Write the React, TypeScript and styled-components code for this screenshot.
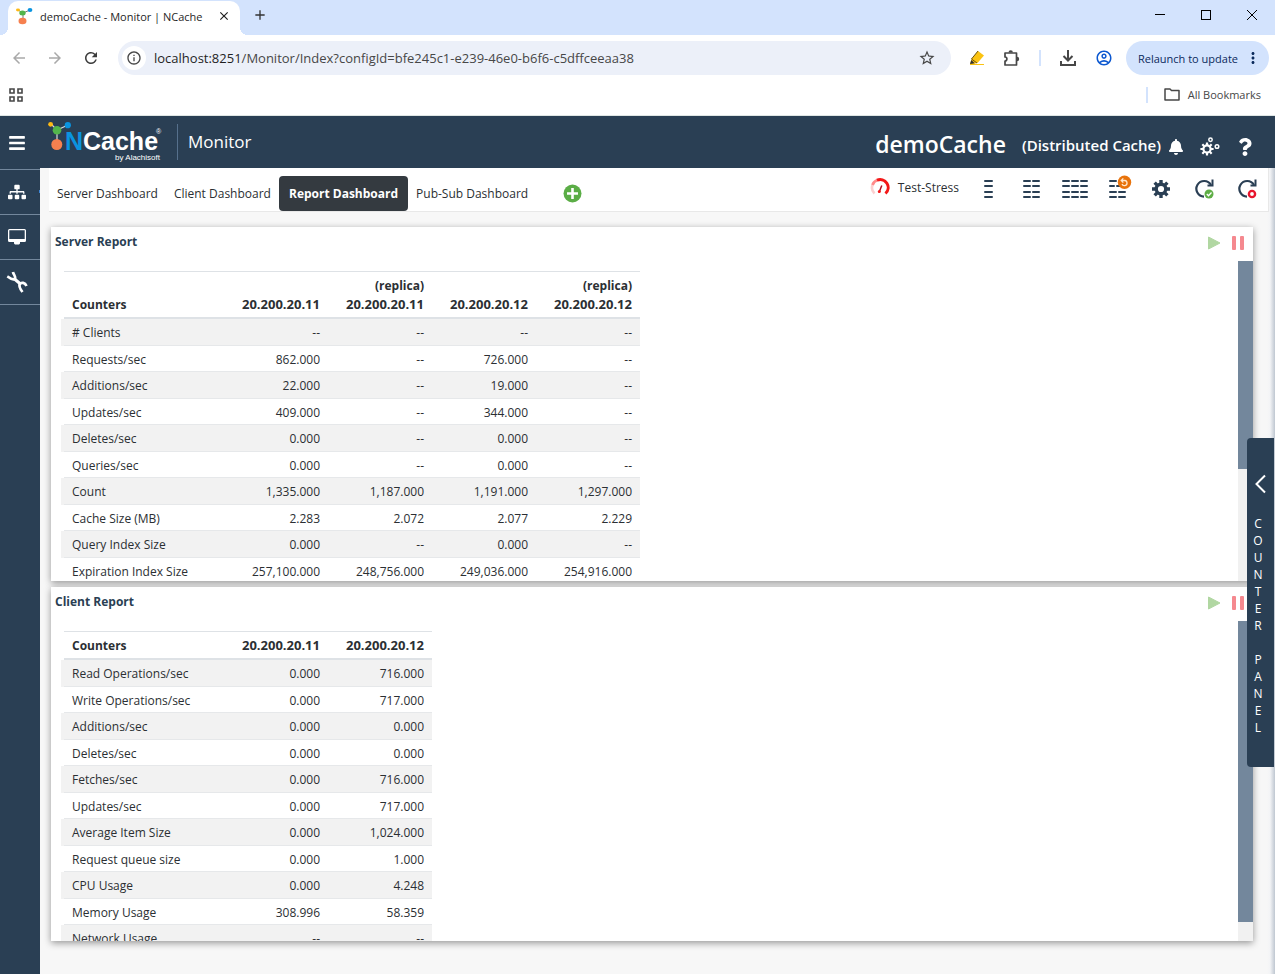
import React from "react";
import styled, { createGlobalStyle, css } from "styled-components";
import { FaBars, FaSitemap, FaBell, FaQuestion } from "react-icons/fa";
import {
  MdArrowBack, MdArrowForward, MdRefresh, MdInfoOutline, MdStarBorder,
  MdOutlineAccountCircle, MdMoreVert, MdAdd, MdClose,
} from "react-icons/md";

const navy = "#2a3f54";
const slate = "#73879c";

const GlobalStyle = createGlobalStyle`
  *, *::before, *::after { box-sizing: border-box; }
  body {
    margin: 0;
    background: #f7f7f7;
    color: #2b2f33;
    font-family: "Open Sans", "Noto Sans", sans-serif;
    font-size: 12px;
  }
  button { font: inherit; color: inherit; background: none; border: 0; padding: 0; cursor: pointer; }
  a { color: inherit; text-decoration: none; }
  svg { display: block; flex: none; }
`;

const Page = styled.div`
  min-height: 100vh;
  display: flex;
  flex-direction: column;
`;

/* ---------- browser frame ---------- */

const TitleBar = styled.div`
  height: 35px;
  display: flex;
  align-items: flex-end;
  padding-left: 8px;
  background: #d3e3fd;
`;

const BrowserTab = styled.div`
  position: relative;
  width: 232px;
  height: 34px;
  padding: 0 9px 4px 8px;
  display: flex;
  align-items: center;
  gap: 7px;
  background: #fff;
  border-radius: 10px 10px 0 0;
  font-size: 11px;
  color: #1f1f1f;
  &::before, &::after {
    content: "";
    position: absolute;
    bottom: 0;
    width: 8px;
    height: 8px;
  }
  &::before { left: -8px; background: radial-gradient(circle at 0 0, #d3e3fd 8px, #fff 8px); }
  &::after { right: -8px; background: radial-gradient(circle at 100% 0, #d3e3fd 8px, #fff 8px); }
`;

const TabTitle = styled.span`
  flex: 1;
  white-space: nowrap;
`;

const NewTab = styled.button`
  height: 30px;
  margin: 0 0 5px 12px;
  color: #333;
`;

const WindowControls = styled.div`
  margin-left: auto;
  height: 30px;
  margin-bottom: 5px;
  display: flex;
`;

const WindowButton = styled.button`
  width: 46px;
  display: flex;
  align-items: center;
  justify-content: center;
`;

const AddressRow = styled.div`
  height: 46px;
  display: flex;
  align-items: center;
  padding: 0 6px 0 10px;
  background: #fff;
  color: #474747;
`;

const NavButton = styled.button<{ $off?: boolean }>`
  width: 18px;
  margin-right: 18px;
  color: ${(p) => (p.$off ? "#a9a9a9" : "#3c3c3c")};
`;

const UrlBar = styled.div`
  flex: 1;
  height: 34px;
  margin-right: 18px;
  padding: 0 15px 0 4px;
  display: flex;
  align-items: center;
  border-radius: 17px;
  background: #ecf0f9;
`;

const SiteInfo = styled.button`
  width: 24px;
  height: 24px;
  display: flex;
  align-items: center;
  justify-content: center;
  border-radius: 12px;
  background: #fff;
`;

const Url = styled.span`
  flex: 1;
  margin-left: 8px;
  font-size: 13px;
  white-space: nowrap;
  b { font-weight: 400; color: #1f1f1f; }
`;

const Tools = styled.div`
  display: flex;
  align-items: center;
  gap: 18px;
`;

const Rule = styled.span`
  width: 2px;
  height: 16px;
  background: #d3e3fd;
`;

const Relaunch = styled.button`
  height: 34px;
  margin-left: 13px;
  padding: 0 7px 0 12px;
  display: flex;
  align-items: center;
  gap: 6px;
  border-radius: 17px;
  background: #d3e3fd;
  color: #0b2a5c;
  font-size: 11px;
  white-space: nowrap;
`;

const BookmarkRow = styled.div`
  height: 35px;
  display: flex;
  align-items: center;
  gap: 16px;
  padding: 0 14px 7px 9px;
  background: #fff;
  border-bottom: 1px solid #dfe6e4;
  color: #474747;
  font-size: 11px;
`;

const Bookmarks = styled.a`
  display: flex;
  align-items: center;
  gap: 8px;
`;

const Push = styled.span`
  flex: 1;
`;

/* ---------- application shell ---------- */

const Shell = styled.div`
  position: relative;
  flex: 1;
  display: flex;
`;

const Sidebar = styled.nav`
  width: 40px;
  flex: none;
  background: ${navy};
`;

const SideItem = styled.a<{ $tall?: boolean; $marked?: boolean }>`
  position: relative;
  height: ${(p) => (p.$tall ? 54 : 45)}px;
  padding-right: 6px;
  display: flex;
  align-items: center;
  justify-content: center;
  border-bottom: 1px solid ${slate};
  color: #fff;
  ${(p) => p.$marked && css`
    &::after {
      content: "";
      position: absolute;
      right: 0;
      top: 20px;
      width: 1px;
      height: 3px;
      background: #3d86d8;
    }
  `}
`;

const Main = styled.main`
  flex: 1;
  min-width: 0;
  display: flex;
  flex-direction: column;
`;

const Header = styled.header`
  height: 52px;
  padding: 0 21px 0 8px;
  display: flex;
  align-items: center;
  background: ${navy};
  color: #fff;
`;

const AppName = styled.h1`
  margin: 0 0 0 15px;
  padding-left: 10px;
  border-left: 1px solid #56708c;
  font-size: 17px;
  line-height: 36px;
  font-weight: 400;
`;

const CacheName = styled.h2`
  margin: 4px 16px 0 auto;
  font-size: 23px;
  line-height: 30px;
  font-weight: 600;
`;

const CacheKind = styled.span`
  margin: 6px 7px 0 0;
  font-size: 15px;
  font-weight: 600;
`;

const HeaderIcons = styled.div`
  display: flex;
  align-items: center;
  gap: 16px;
  margin-top: 10px;
`;

const Content = styled.div`
  flex: 1;
  padding: 0 6px 33px 9px;
  background: linear-gradient(to left, #bfc7d1, #f3f4f6 5px, #f7f7f7 8px);
`;

const TabBar = styled.div`
  height: 44px;
  display: flex;
  background: #fff;
  border: 1px solid #e8e8e8;
  border-top: 0;
  border-left: 0;
`;

const Tabs = styled.nav`
  display: flex;
  align-items: flex-end;
`;

const Tab = styled.a<{ $active?: boolean }>`
  height: 35px;
  padding: 0 8px;
  border-radius: 4px;
  line-height: 36px;
  white-space: nowrap;
  ${(p) => p.$active && css`
    padding: 0 10px;
    background: #343a40;
    color: #fff;
    font-weight: 700;
  `}
`;

const AddTab = styled.button`
  margin: 0 0 8px 27px;
`;

const Actions = styled.div`
  margin-left: auto;
  padding-bottom: 1px;
  display: flex;
`;

const Action = styled.button`
  width: 43px;
  display: flex;
  align-items: center;
  justify-content: center;
  color: ${navy};
`;

const Stress = styled.button`
  display: flex;
  align-items: center;
  gap: 8px;
  margin-right: 8px;
  padding-bottom: 4px;
  white-space: nowrap;
`;

const Panels = styled.div`
  padding: 15px 16px 0 2px;
  display: flex;
  flex-direction: column;
  gap: 6px;
`;

const Panel = styled.section`
  background: #fff;
  box-shadow: 0 2px 7px rgba(0, 0, 0, 0.4);
`;

const PanelHead = styled.div`
  height: 34px;
  padding: 0 9px 5px 4px;
  display: flex;
  align-items: center;
  gap: 11px;
`;

const PanelTitle = styled.h3`
  flex: 1;
  margin: 0;
  color: ${navy};
  font-size: 12px;
  font-weight: 700;
`;

const PanelButton = styled.button`
  padding-top: 2px;
`;

const PanelBody = styled.div`
  height: 320px;
  display: flex;
`;

const Viewport = styled.div`
  flex: 1;
  overflow: hidden;
  padding: 10px 13px 0;
`;

const Track = styled.div`
  width: 15px;
  background: #f1f1f1;
`;

const Thumb = styled.div<{ $share: number }>`
  height: ${(p) => p.$share}%;
  background: ${slate};
`;

const Table = styled.table`
  border-collapse: separate;
  border-spacing: 0;
  table-layout: fixed;
  width: max-content;
  th, td { text-align: right; white-space: nowrap; padding: 2px 8px 0; }
  th:first-child, td:first-child { text-align: left; }
  th {
    width: 104px;
    padding: 4px 8px 3px;
    border-top: 1px solid #dee2e6;
    border-bottom: 2px solid #dee2e6;
    line-height: 19px;
    vertical-align: bottom;
    font-weight: 700;
  }
  th:first-child { width: 160px; }
  td { height: 27px; line-height: 24px; border-bottom: 1px solid #e6e8ea; }
  tr:nth-child(even) td { height: 26px; line-height: 23px; }
  tbody tr:nth-child(odd) td { background: #f2f2f2; }
  tbody tr:nth-child(odd) td:first-child { box-shadow: -3px 0 0 #f2f2f2; }
`;

const Address = styled.div`
  font-size: 13px;
`;

const CounterPanel = styled.button`
  position: absolute;
  top: 322px;
  right: 1px;
  width: 27px;
  height: 329px;
  padding: 36px 5px 0 0;
  display: flex;
  flex-direction: column;
  align-items: center;
  gap: 21px;
  border-radius: 4px 0 0 4px;
  background: ${navy};
  color: #fff;
`;

const Letters = styled.span`
  white-space: pre;
  text-align: center;
  line-height: 17px;
`;

/* ---------- drawings ---------- */

const Molecule = () => (
  <g>
    <path d="M3 4 9 10 20 5M9 10v14" stroke="#d9d9d9" strokeWidth="1.2" fill="none" />
    <circle cx="2.600" cy="4.300" r="2.400" fill="#fdb913" />
    <circle cx="19.800" cy="5.200" r="3.100" fill="#0a94e0" />
    <circle cx="9" cy="10.300" r="4.300" fill="#52b54b" />
    <circle cx="8.800" cy="24.500" r="5.500" fill="#f6804f" />
  </g>
);

const Favicon = () => (
  <svg width="17" height="17" viewBox="0 0 17 17">
    <path d="M2 2 7 5 14 2M7 5v8" stroke="#777" strokeWidth="1" fill="none" />
    <ellipse cx="2" cy="2" rx="2" ry="1.400" fill="#fdb913" />
    <ellipse cx="14" cy="2" rx="2.400" ry="1.900" fill="#0a94e0" />
    <ellipse cx="6.500" cy="5" rx="3.200" ry="2.500" fill="#52b54b" />
    <ellipse cx="6.500" cy="13" rx="4" ry="3.300" fill="#f6804f" />
  </svg>
);

const Logo = () => (
  <svg width="114" height="42" viewBox="0 0 114 42" aria-label="NCache by Alachisoft">
    <g transform="translate(0 -1)"><Molecule /></g>
    <g fontFamily="Liberation Sans, sans-serif">
      <text x="17" y="29" fontSize="25" fontWeight="700" fill="#0a94e0">N</text>
      <text x="35" y="29" fontSize="25" fontWeight="700" fill="#fff">Cache</text>
      <text x="108" y="13" fontSize="7" fill="#fff">®</text>
      <text x="112" y="39" fontSize="8" fill="#fff" textAnchor="end">by Alachisoft</text>
    </g>
  </svg>
);

const MonitorIcon = () => (
  <svg width="20" height="18" viewBox="0 0 20 18">
    <path fillRule="evenodd" fill="#fff" d="M2.500 1h15A1.500 1.500 0 0 1 19 2.500v10a1.500 1.500 0 0 1-1.500 1.500H13v1.500l-1 1H8l-1-1V14H2.500A1.500 1.500 0 0 1 1 12.500v-10A1.500 1.500 0 0 1 2.500 1zM2.300 2.300v8.700h15.400V2.300z" />
  </svg>
);

const ToolsIcon = () => (
  <svg width="22" height="22" viewBox="0 0 22 22" fill="none" stroke="#fff" strokeWidth="2.700">
    <path d="M7 1c.3 2.500 3 4 2 7M1.300 5.300c2 1.200 4 4 7.700 2.700" />
    <path d="m8 7.500 7 6" strokeWidth="3" />
    <path d="M13.500 13c2-2 5.500-1.500 7 2M14 12.500c-1.500 2.500.5 6 2.500 8.500" />
  </svg>
);

const gearTeeth = (cx: number, cy: number, inner: number, outer: number) =>
  Array.from({ length: 8 }, (_, i) => {
    const a = (i * Math.PI) / 4;
    const [c, s] = [Math.cos(a), Math.sin(a)];
    return `M${cx + c * inner} ${cy + s * inner}L${cx + c * outer} ${cy + s * outer}`;
  }).join("");

const GearIcon = () => (
  <svg width="18" height="18" viewBox="0 0 18 18" fill="none" stroke={navy}>
    <circle cx="9" cy="9" r="4.800" strokeWidth="3.400" />
    <path d={gearTeeth(9, 9, 5.5, 9)} strokeWidth="3.400" />
  </svg>
);

const GearsIcon = () => (
  <svg width="20" height="20" viewBox="0 0 20 20" fill="none" stroke="#fff">
    <circle cx="7" cy="12" r="3.600" strokeWidth="2.200" />
    <path d={gearTeeth(7, 12, 4, 6.6)} strokeWidth="2.200" />
    <circle cx="10.500" cy="2.800" r="1.700" strokeWidth="1.500" />
    <circle cx="17" cy="9.500" r="1.800" strokeWidth="1.500" />
  </svg>
);

const Gauge = () => (
  <svg width="20" height="20" viewBox="0 0 20 20" fill="none">
    <path d="M4.500 16.500A8 8 0 0 1 2.500 8" stroke="#fbd0d0" strokeWidth="2.600" />
    <path d="M2.500 8A8 8 0 0 1 7.500 3" stroke="#ff8a8a" strokeWidth="2.800" />
    <path d="M7 3.200A8 8 0 0 1 15.500 16.500" stroke="#f31818" strokeWidth="3" />
    <path d="M9 15.500 11.800 8.500" stroke="#b01020" strokeWidth="1.500" />
    <circle cx="9.300" cy="14.500" r="1.500" fill="#f31818" />
  </svg>
);

const Lines = ({ cols, w }: { cols: number; w: number }) => {
  const total = cols * w + (cols - 1);
  return (
    <svg width={total} height="20" viewBox={`0 0 ${total} 20`} fill={navy}>
      {[1, 6, 12, 17].map((y) =>
        Array.from({ length: cols }, (_, c) => (
          <rect key={`${y}-${c}`} x={c * (w + 1)} y={y} width={w} height="2" rx="1" />
        ))
      )}
    </svg>
  );
};

const ResetLayout = () => (
  <svg width="18" height="20" viewBox="0 0 18 20" overflow="visible">
    <g fill={navy}>
      <rect x="0" y="1" width="8" height="2" rx="1" />
      <rect x="0" y="6" width="6" height="2" rx="1" /><rect x="7" y="6" width="6" height="2" rx="1" />
      <rect x="0" y="12" width="8" height="2" rx="1" /><rect x="9" y="12" width="8" height="2" rx="1" />
      <rect x="0" y="17" width="8" height="2" rx="1" /><rect x="9" y="17" width="8" height="2" rx="1" />
    </g>
    <circle cx="15.500" cy="3.200" r="6.700" fill="#e8730c" />
    <path d="M12.500 1.500h3.300a2.600 2.600 0 1 1-2.800 3.500M14.300-.6l-2.100 2.100 2.100 2.100" stroke="#ffe9d0" strokeWidth="1.300" fill="none" />
  </svg>
);

const RefreshIcon = ({ stop }: { stop?: boolean }) => (
  <svg width="20" height="22" viewBox="0 0 20 22" fill="none">
    <path d="M17 7A7.800 7.800 0 1 0 10 18.600" stroke={navy} strokeWidth="2.200" />
    <path d="M13.500 7.500h5V1.500" stroke={navy} strokeWidth="2" />
    {stop ? (
      <circle cx="15" cy="16" r="3.100" fill="#fff" stroke="#e8152d" strokeWidth="2.400" />
    ) : (
      <>
        <circle cx="15" cy="16" r="4.500" fill="#5fae46" />
        <path d="m12.800 16 1.700 1.700 3-3.200" stroke="#fff" strokeWidth="1.300" />
      </>
    )}
  </svg>
);

const PlusIcon = () => (
  <svg width="19" height="19" viewBox="0 0 19 19">
    <circle cx="9.500" cy="9.500" r="9" fill="#5bad46" />
    <path d="M9.500 4v11M4 9.500h11" stroke="#fff" strokeWidth="2.600" />
  </svg>
);

const Play = () => (
  <svg width="14" height="14" viewBox="0 0 14 14">
    <path d="M1.500 1v12L13 7z" fill="#b1d7a2" stroke="#b1d7a2" strokeLinejoin="round" />
  </svg>
);

const Pause = () => (
  <svg width="12" height="14" viewBox="0 0 12 14" fill="#f5898f">
    <rect x="0" y="0" width="4" height="14" rx="1" />
    <rect x="8" y="0" width="4" height="14" rx="1" />
  </svg>
);

const Highlighter = () => (
  <svg width="16" height="16" viewBox="0 0 16 16">
    <path d="m1 14 1.500-5L9 1l6 4.500-6.500 7.500L4 14z" fill="#fbc312" />
    <path d="M9 1 2.500 9l5.500 4" fill="none" stroke="#6b5310" strokeWidth="1" />
    <path d="m1 14 1.300-4 3.500 3.200z" fill="#333" />
    <path d="M1 14.500h14" stroke="#fbc312" />
  </svg>
);

const Puzzle = () => (
  <svg width="18" height="18" viewBox="0 0 18 18" fill="none" stroke="#474747" strokeWidth="1.700">
    <path d="M2 4h11.500v12H2v-4c2.500 0 2.500-4 0-4z" strokeLinejoin="round" />
    <path d="M5.500 3.500a2.200 2.200 0 0 1 4.400 0zM14 7.800a2.200 2.200 0 0 1 0 4.400z" fill="#474747" stroke="none" />
  </svg>
);

const Download = () => (
  <svg width="18" height="18" viewBox="0 0 18 18" fill="none" stroke="#474747" strokeWidth="2">
    <path d="M9 1v10M4.500 7 9 11.500 13.500 7M2 12v4h14v-4" />
  </svg>
);

const Folder = () => (
  <svg width="16" height="13" viewBox="0 0 16 13" fill="none" stroke="#474747" strokeWidth="1.500">
    <path d="M1 1h5l1.500 1.500H15V12H1z" strokeLinejoin="round" />
  </svg>
);

const AppsGrid = () => (
  <svg width="14" height="14" viewBox="0 0 14 14" fill="none" stroke="#474747" strokeWidth="1.600">
    <path d="M1 1h4v4H1zM9 1h4v4H9zM1 9h4v4H1zM9 9h4v4H9z" />
  </svg>
);

/* ---------- data ---------- */

type Head = { address: string; replica?: boolean };

const serverHeads: Head[] = [
  { address: "20.200.20.11" },
  { address: "20.200.20.11", replica: true },
  { address: "20.200.20.12" },
  { address: "20.200.20.12", replica: true },
];
const serverRows = [
  ["# Clients", "--", "--", "--", "--"],
  ["Requests/sec", "862.000", "--", "726.000", "--"],
  ["Additions/sec", "22.000", "--", "19.000", "--"],
  ["Updates/sec", "409.000", "--", "344.000", "--"],
  ["Deletes/sec", "0.000", "--", "0.000", "--"],
  ["Queries/sec", "0.000", "--", "0.000", "--"],
  ["Count", "1,335.000", "1,187.000", "1,191.000", "1,297.000"],
  ["Cache Size (MB)", "2.283", "2.072", "2.077", "2.229"],
  ["Query Index Size", "0.000", "--", "0.000", "--"],
  ["Expiration Index Size", "257,100.000", "248,756.000", "249,036.000", "254,916.000"],
];

const clientHeads: Head[] = [{ address: "20.200.20.11" }, { address: "20.200.20.12" }];
const clientRows = [
  ["Read Operations/sec", "0.000", "716.000"],
  ["Write Operations/sec", "0.000", "717.000"],
  ["Additions/sec", "0.000", "0.000"],
  ["Deletes/sec", "0.000", "0.000"],
  ["Fetches/sec", "0.000", "716.000"],
  ["Updates/sec", "0.000", "717.000"],
  ["Average Item Size", "0.000", "1,024.000"],
  ["Request queue size", "0.000", "1.000"],
  ["CPU Usage", "0.000", "4.248"],
  ["Memory Usage", "308.996", "58.359"],
  ["Network Usage", "--", "--"],
];

const Report = ({ title, heads, rows, share }: { title: string; heads: Head[]; rows: string[][]; share: number }) => (
  <Panel>
    <PanelHead>
      <PanelTitle>{title}</PanelTitle>
      <PanelButton aria-label="Start"><Play /></PanelButton>
      <PanelButton aria-label="Pause"><Pause /></PanelButton>
    </PanelHead>
    <PanelBody>
      <Viewport>
        <Table>
          <thead>
            <tr>
              <th scope="col">Counters</th>
              {heads.map((head, i) => (
                <th scope="col" key={i}>
                  {head.replica && <div>(replica)</div>}
                  <Address>{head.address}</Address>
                </th>
              ))}
            </tr>
          </thead>
          <tbody>
            {rows.map((row) => (
              <tr key={row[0]}>{row.map((cell, i) => <td key={i}>{cell}</td>)}</tr>
            ))}
          </tbody>
        </Table>
      </Viewport>
      <Track><Thumb $share={share} /></Track>
    </PanelBody>
  </Panel>
);

export default function App() {
  return (
    <Page>
      <GlobalStyle />
      <TitleBar>
        <BrowserTab>
          <Favicon />
          <TabTitle>demoCache - Monitor | NCache</TabTitle>
          <button aria-label="Close tab"><MdClose size={14} /></button>
        </BrowserTab>
        <NewTab aria-label="New tab"><MdAdd size={16} /></NewTab>
        <WindowControls>
          <WindowButton aria-label="Minimize">
            <svg width="10" height="10"><path d="M0 4.500h10" stroke="#000" /></svg>
          </WindowButton>
          <WindowButton aria-label="Maximize">
            <svg width="10" height="10"><rect x=".5" y=".5" width="9" height="9" fill="none" stroke="#000" /></svg>
          </WindowButton>
          <WindowButton aria-label="Close">
            <svg width="10" height="10"><path d="m0 0 10 10M10 0 0 10" stroke="#000" /></svg>
          </WindowButton>
        </WindowControls>
      </TitleBar>
      <AddressRow>
        <NavButton $off aria-label="Back"><MdArrowBack size={18} /></NavButton>
        <NavButton $off aria-label="Forward"><MdArrowForward size={18} /></NavButton>
        <NavButton aria-label="Reload"><MdRefresh size={18} /></NavButton>
        <UrlBar>
          <SiteInfo aria-label="Site information"><MdInfoOutline size={16} /></SiteInfo>
          <Url><b>localhost:8251</b>/Monitor/Index?configId=bfe245c1-e239-46e0-b6f6-c5dffceeaa38</Url>
          <button aria-label="Bookmark this page"><MdStarBorder size={18} /></button>
        </UrlBar>
        <Tools>
          <button aria-label="Highlighter"><Highlighter /></button>
          <button aria-label="Extensions"><Puzzle /></button>
          <Rule />
          <button aria-label="Downloads"><Download /></button>
          <button aria-label="Profile"><MdOutlineAccountCircle size={18} color="#0b57d0" /></button>
        </Tools>
        <Relaunch>Relaunch to update <MdMoreVert size={18} /></Relaunch>
      </AddressRow>
      <BookmarkRow>
        <button aria-label="Apps"><AppsGrid /></button>
        <Push />
        <Rule />
        <Bookmarks href="#bookmarks"><Folder />All Bookmarks</Bookmarks>
      </BookmarkRow>

      <Shell>
        <Sidebar>
          <SideItem href="#menu" $tall aria-label="Menu"><FaBars size={18} /></SideItem>
          <SideItem href="#clusters" $marked aria-label="Clusters"><FaSitemap size={18} /></SideItem>
          <SideItem href="#monitor" aria-label="Monitor"><MonitorIcon /></SideItem>
          <SideItem href="#tools" aria-label="Tools"><ToolsIcon /></SideItem>
        </Sidebar>
        <Main>
          <Header>
            <Logo />
            <AppName>Monitor</AppName>
            <CacheName>demoCache</CacheName>
            <CacheKind>(Distributed Cache)</CacheKind>
            <HeaderIcons>
              <button aria-label="Notifications"><FaBell size={16} /></button>
              <button aria-label="Configuration"><GearsIcon /></button>
              <button aria-label="Help"><FaQuestion size={18} /></button>
            </HeaderIcons>
          </Header>
          <Content>
            <TabBar>
              <Tabs>
                <Tab href="#server">Server Dashboard</Tab>
                <Tab href="#client">Client Dashboard</Tab>
                <Tab href="#report" $active>Report Dashboard</Tab>
                <Tab href="#pubsub">Pub-Sub Dashboard</Tab>
                <AddTab aria-label="Add dashboard"><PlusIcon /></AddTab>
              </Tabs>
              <Actions>
                <Stress><Gauge />Test-Stress</Stress>
                <Action aria-label="One column"><Lines cols={1} w={9} /></Action>
                <Action aria-label="Two columns"><Lines cols={2} w={8} /></Action>
                <Action aria-label="Three columns"><Lines cols={3} w={8} /></Action>
                <Action aria-label="Reset layout"><ResetLayout /></Action>
                <Action aria-label="Settings"><GearIcon /></Action>
                <Action aria-label="Start refresh"><RefreshIcon /></Action>
                <Action aria-label="Stop refresh"><RefreshIcon stop /></Action>
              </Actions>
            </TabBar>
            <Panels>
              <Report title="Server Report" heads={serverHeads} rows={serverRows} share={65} />
              <Report title="Client Report" heads={clientHeads} rows={clientRows} share={94} />
            </Panels>
          </Content>
        </Main>
        <CounterPanel aria-label="Counter panel">
          <svg width="16" height="20" viewBox="0 0 16 20" fill="none" stroke="#fff" strokeWidth="2">
            <path d="M15 1.500 6.500 10l8.500 8.500" />
          </svg>
          <Letters>{"COUNTER PANEL".split("").join("\n")}</Letters>
        </CounterPanel>
      </Shell>
    </Page>
  );
}
